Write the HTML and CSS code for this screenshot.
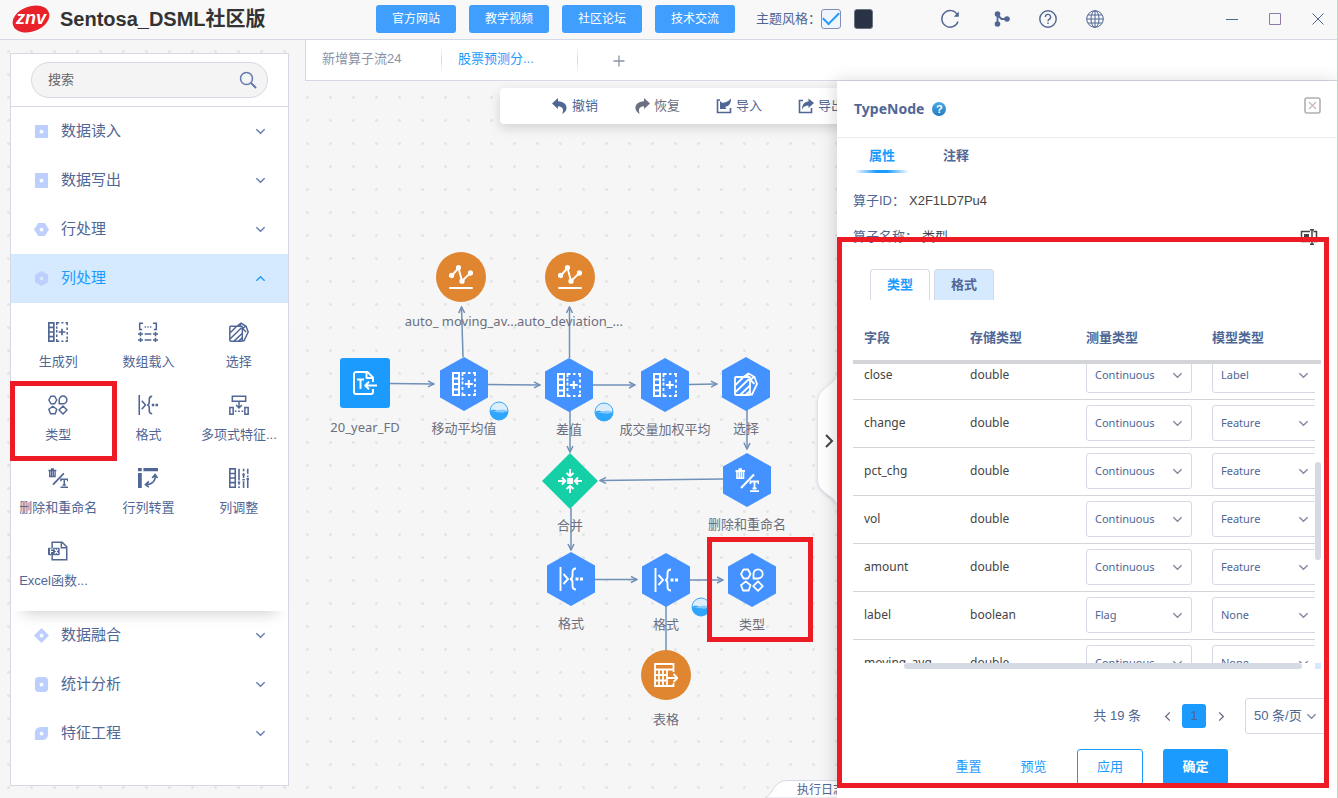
FILE: index.html
```html
<!DOCTYPE html>
<html lang="zh-CN">
<head>
<meta charset="utf-8">
<title>Sentosa_DSML社区版</title>
<link rel="stylesheet" href="styles.css">
</head>
<body>
<svg class="sprite" aria-hidden="true">
  <defs>
    <symbol id="i-down" viewBox="0 0 12 12"><path d="M1.500 3.500 6 8l4.500-4.500" fill="none" stroke="currentColor" stroke-width="1.500"/></symbol>
    <symbol id="i-gencol" viewBox="0 0 24 24"><g fill="none" stroke="currentColor" stroke-width="2"><path d="M1 1h6v22H1zM1 6.500h6M1 12h6M1 17.500h6"/><path d="M10.500 4V1h3M16 1h2.500M21 1h2v3M23 6.500v3M23 12v3M23 17.500v2.500M23 21v2h-2M18.500 23H16M13.500 23h-3v-2.500M10.500 18v-3M10.500 12.500v-3M10.500 8V5.500" stroke-width="1.800"/><path d="M12.800 12h8M16.800 8v8"/></g></symbol>
    <symbol id="i-array" viewBox="0 0 24 24"><g fill="none" stroke="currentColor" stroke-width="1.800"><path d="M6 1.500H2V9h3M18 1.500h4V9h-3"/><path d="M8 6h1.500M11.200 6h1.500M14.500 6H16"/><path d="M0 14.500h6M3 12v5M8 14.500h8M18 14.500h6M21 12v5M0 21.500h6M3 19v5M8 21.500h8M18 21.500h6M21 19v5"/></g></symbol>
    <symbol id="i-select" viewBox="0 0 24 24"><g fill="none" stroke="currentColor" stroke-width="1.800"><rect x="1" y="5" width="15" height="18" rx="1"/><path d="M1.500 13 9 5.500M1.500 20 15 7M6 23l10-9.500M11.500 23l4.500-4"/><path d="m10 4.500 4.500-3 6 3.500 2.500 7-5 10.500h-2.500M14.500 1.500l-2 4M15.500 9l4-4M16 7.500l4.500 4.500"/></g></symbol>
    <symbol id="i-type" viewBox="0 0 24 24"><g fill="none" stroke="currentColor" stroke-width="1.800" stroke-linejoin="round"><path d="M3.500 1.500h4.500l2.500 4.500L8 10.500H3.500L1 6z"/><path d="M13.500 10.500V6A4.600 4.600 0 1 1 18 10.500z"/><path d="m5.800 13.500 4.700 3.600-1.800 5.400H3L1 17.100z"/><path d="m18 13.300 4.800 4.800-4.800 4.800-4.800-4.800z"/></g></symbol>
    <symbol id="i-format" viewBox="0 0 24 24"><g fill="none" stroke="currentColor" stroke-width="1.900"><path d="M1.500 0v24M4.500 7l4.500 5-4.500 5"/><path d="M17 1.500c-3 0-3.500 1.500-3.500 4v3c0 2-.7 3.500-2.500 3.500 1.800 0 2.500 1.500 2.500 3.500v3c0 2.500.5 4 3.500 4"/></g><path d="M16.500 10.500h3v3h-3zM21 10.500h3v3h-3z" fill="currentColor"/></symbol>
    <symbol id="i-poly" viewBox="0 0 24 24"><g fill="none" stroke="currentColor" stroke-width="1.800"><path d="M4 1.500h16v6H4zM1 15h4v8H1zM19 15h4v8h-4zM12 7.500V15M8.500 12l3.500 3.500 3.500-3.500M7 19.500h2M11 19.500h2M15 19.500h2"/></g></symbol>
    <symbol id="i-rename" viewBox="0 0 24 24"><g fill="none" stroke="currentColor"><path d="M.5 3h9.500M3.500 1.200h3.500" stroke-width="1.800"/><path d="M2 3.500v6.700h6.500V3.500M4.200 3.500v6M6.300 3.500v6" stroke-width="1.600"/><path d="M6 20 19 6.500" stroke-width="2"/><path d="M15.500 16v-2.500h8V16M19.500 13.500v7M17.500 20.500h4M15 23.200h9" stroke-width="1.800"/></g></symbol>
    <symbol id="i-transpose" viewBox="0 0 24 24"><g fill="currentColor"><path d="M0 0h4.500v4H0zM6.500 0H24v4H6.500zM0 6h4.500v18H0z"/></g><path d="M20.500 9c1 6-3.500 11-11 11M17 12l3.500-4 3 4M13 16l-4 4 4 3" fill="none" stroke="currentColor" stroke-width="2"/></symbol>
    <symbol id="i-coladj" viewBox="0 0 24 24"><g fill="none" stroke="currentColor" stroke-width="1.900"><path d="M1 1h6.500v22H1zM1 6.500h6.500M1 12h6.500M1 17.500h6.500M12 1v14M12 18v2M12 22v2M17.500 1v3M17.500 6v6M16 14h3M17.500 16v8M22.500 1v6M22.500 9v2M22.500 13v11M10.500 17h3M16 8h3M21 13h3"/></g></symbol>
    <symbol id="i-fx" viewBox="0 0 24 24"><g fill="none" stroke="currentColor" stroke-width="1.800"><path d="M5 8V1.500h12l5.500 5.500v15.500H5V17M16 1.500V8h6.500"/></g><rect x="0" y="8" width="14" height="9" rx="1" fill="currentColor"/><path d="M3 15.500v-6h3.500M3 12.500h3M8 9.500l4 6M12 9.500l-4 6" fill="none" stroke="#fff" stroke-width="1.300"/></symbol>
    <symbol id="i-chart" viewBox="0 0 24 24"><g stroke="currentColor" stroke-width="1.900" fill="currentColor"><path d="M2.500 11 9.500 3 13 16l8.500-8" fill="none"/><circle cx="2.500" cy="10.500" r="1.700"/><circle cx="9.500" cy="2.700" r="1.700"/><circle cx="13" cy="16.200" r="1.700"/><circle cx="21.500" cy="8" r="1.700"/></g><path d="M.3 23h23.400" stroke="currentColor" stroke-width="2"/></symbol>
    <symbol id="i-read" viewBox="0 0 24 24"><g fill="none" stroke="currentColor" stroke-width="1.900" stroke-linejoin="round"><path d="M20 11V6.500L14.500 1H3a2 2 0 0 0-2 2v18a2 2 0 0 0 2 2h15a2 2 0 0 0 2-2v-3M13.500 1v6H20"/><path d="M4 8.500h7M7.500 8.500V18M24 14.500H12.500M16 10.800l-3.800 3.700 3.800 3.700"/></g></symbol>
    <symbol id="i-merge" viewBox="0 0 24 24"><path d="M9 9h6v6H9z" fill="currentColor"/><path d="M12 0v6.500M8.500 4 12 7.200 15.500 4M12 24v-6.500M8.500 20l3.500-3.200 3.500 3.200M0 12h6.500M4 8.500 7.200 12 4 15.500M24 12h-6.500M20 8.500 16.800 12l3.200 3.500" fill="none" stroke="currentColor" stroke-width="2"/></symbol>
    <symbol id="i-table" viewBox="0 0 24 24"><g fill="none" stroke="currentColor" stroke-width="1.800"><path d="M19.500 9V1H1v22h18.500v-3M1 6.500h18.500M1 12h11M1 17.500h11M5 6.500V23M9 6.500V23M13 6.500V23M13 15h10M19.500 11l4 4-4 4"/></g></symbol>
    <symbol id="i-undo" viewBox="0 0 16 16"><path d="M0 5.500 6 0v3.300c6 .2 9 3.700 8.500 7.200-.3 2.300-1.800 4.200-4.500 5.500 1.700-2.500 2-7.500-4-7.700V11z" fill="currentColor"/></symbol>
    <symbol id="i-redo" viewBox="0 0 16 16"><path d="M16 5.500 10 0v3.300C4 3.500 1 7 1.500 10.500 1.800 12.800 3.300 14.700 6 16 4.300 13.500 4 8.500 10 8.300V11z" fill="currentColor"/></symbol>
    <symbol id="i-import" viewBox="0 0 16 16"><path d="M4 2H1.500v12.500h13V10" fill="none" stroke="currentColor" stroke-width="1.600"/><path d="M4 8V3l2 1.800C9 5 12 4 15 .5c0 5-2 8-6 8.200l1.500 2.300H4z" fill="currentColor"/></symbol>
    <symbol id="i-export" viewBox="0 0 16 16"><path d="M5 2.500H1.500v12h12V10" fill="none" stroke="currentColor" stroke-width="1.600"/><path d="m16 5-5.500-4.500v3C6 4 4 7 4 11.500 5.500 8.500 7.500 7.500 10.500 7.500V10z" fill="currentColor"/></symbol>
    <symbol id="i-wave" viewBox="0 0 20 20"><circle cx="10" cy="10" r="9" fill="#dcedfb"/><path d="M1 10c3-2 5-1.500 8 .2s6 1.500 10-.7c.4 6-4 9.500-9 9.500S.6 15 1 10z" fill="#2ea5ff"/><path d="M1 10.500c4 1 6-1 9-1.500s6-.5 9 1c-3 .5-5 2-8 1.500S5 11.500 1 10.500z" fill="#85c8fb"/><circle cx="10" cy="10" r="9" fill="none" stroke="#3ba7f5"/></symbol>
  </defs>
</svg>

<div class="app">
  <header class="topbar">
    <svg class="logo" viewBox="0 0 38 30" role="img" aria-label="znv"><ellipse cx="19" cy="15" rx="19" ry="12.500" transform="rotate(-20 19 15)" fill="#e8212b"/><text class="logo-text" x="19" y="20" text-anchor="middle">znv</text></svg>
    <h1 class="brand">Sentosa_DSML社区版</h1>
    <nav class="links">
      <button class="link-btn" type="button">官方网站</button>
      <button class="link-btn" type="button">教学视频</button>
      <button class="link-btn" type="button">社区论坛</button>
      <button class="link-btn" type="button">技术交流</button>
    </nav>
    <div class="theme">
      <label for="theme-light">主题风格：</label>
      <input class="theme-check" id="theme-light" type="checkbox" checked>
      <button class="theme-dark" type="button" aria-label="深色"></button>
    </div>
    <div class="top-icons">
      <button class="icon-btn icon-refresh" type="button" aria-label="刷新"><svg width="20" height="20" viewBox="0 0 20 20"><path d="M17.500 6A8.300 8.300 0 1 0 18 12.500" fill="none" stroke="currentColor" stroke-width="1.400"/><path d="M18.800 2.500v5.300h-5z" fill="currentColor"/></svg></button>
      <button class="icon-btn" type="button" aria-label="分支"><svg width="18" height="18" viewBox="0 0 18 18"><path d="M4.500 3.500v11M4.500 5l4 4H14" fill="none" stroke="currentColor" stroke-width="1.800"/><g fill="currentColor"><circle cx="4.500" cy="4" r="2.800"/><circle cx="4.500" cy="14" r="2.800"/><circle cx="14" cy="9" r="2.800"/></g></svg></button>
      <button class="icon-btn" type="button" aria-label="帮助"><svg width="20" height="20" viewBox="0 0 20 20"><g fill="none" stroke="currentColor" stroke-width="1.400"><circle cx="10" cy="10" r="8.200"/><path d="M7.400 8a2.600 2.600 0 1 1 3.800 2.300c-.9.500-1.200.9-1.200 1.900M10 13.400v1.600"/></g></svg></button>
      <button class="icon-btn" type="button" aria-label="语言"><svg width="20" height="20" viewBox="0 0 20 20"><g fill="none" stroke="currentColor" stroke-width="1"><circle cx="10" cy="10" r="8.300"/><ellipse cx="10" cy="10" rx="4" ry="8.300"/><path d="M10 1.700v16.600M1.700 10h16.600M3 6h14M3 14h14"/></g></svg></button>
    </div>
    <div class="win-icons">
      <button class="icon-btn" type="button" aria-label="最小化"><svg width="14" height="14" viewBox="0 0 14 14"><path d="M1 7.500h12" stroke="currentColor"/></svg></button>
      <button class="icon-btn" type="button" aria-label="最大化"><svg width="14" height="14" viewBox="0 0 14 14"><path d="M1.500 1.500h11v11h-11z" fill="none" stroke="#8f7aa8"/></svg></button>
      <button class="icon-btn" type="button" aria-label="关闭"><svg width="14" height="14" viewBox="0 0 14 14"><path d="m1.500 1.500 11 11M12.500 1.500l-11 11" stroke="currentColor"/></svg></button>
    </div>
  </header>

  <div class="body">
    <aside class="side">
      <div class="side-panel">
        <div class="search-row">
          <div class="search">
            <input class="search-input" type="text" placeholder="搜索" aria-label="搜索">
            <svg width="18" height="18" viewBox="0 0 18 18"><g fill="none" stroke="#6479ae" stroke-width="1.500"><circle cx="7.500" cy="7.500" r="6"/><path d="m12 12 5 5" stroke-width="2"/></g></svg>
          </div>
        </div>
        <button class="cat" type="button"><svg class="cat-icon" viewBox="0 0 16 16"><rect x="1" y="1" width="14" height="14" rx="1"/><circle class="hole" cx="8" cy="8" r="2"/></svg><span class="cat-name">数据读入</span><svg class="chev"><use href="#i-down"/></svg></button>
        <button class="cat" type="button"><svg class="cat-icon" viewBox="0 0 16 16"><rect x="1" y="0" width="14" height="16" rx="1"/><circle class="hole" cx="8" cy="8" r="2"/></svg><span class="cat-name">数据写出</span><svg class="chev"><use href="#i-down"/></svg></button>
        <button class="cat" type="button"><svg class="cat-icon" viewBox="0 0 16 16"><path d="M4.500 1h7L16 8l-4.500 7h-7L0 8z"/><circle class="hole" cx="8" cy="8" r="2"/></svg><span class="cat-name">行处理</span><svg class="chev"><use href="#i-down"/></svg></button>
        <button class="cat cat-on" type="button"><svg class="cat-icon" viewBox="0 0 16 16"><path d="m8 0 7 4v8l-7 4-7-4V4z"/><circle class="hole" cx="8" cy="8" r="2"/></svg><span class="cat-name">列处理</span><svg class="chev"><use href="#i-down"/></svg></button>
        <div class="tools">
          <div class="tool"><svg class="tool-icon"><use href="#i-gencol"/></svg><span>生成列</span></div>
          <div class="tool"><svg class="tool-icon"><use href="#i-array"/></svg><span>数组载入</span></div>
          <div class="tool"><svg class="tool-icon"><use href="#i-select"/></svg><span>选择</span></div>
          <div class="tool"><svg class="tool-icon"><use href="#i-type"/></svg><span>类型</span><i class="mark mark-tool"></i></div>
          <div class="tool"><svg class="tool-icon"><use href="#i-format"/></svg><span>格式</span></div>
          <div class="tool"><svg class="tool-icon"><use href="#i-poly"/></svg><span>多项式特征...</span></div>
          <div class="tool"><svg class="tool-icon"><use href="#i-rename"/></svg><span>删除和重命名</span></div>
          <div class="tool"><svg class="tool-icon"><use href="#i-transpose"/></svg><span>行列转置</span></div>
          <div class="tool"><svg class="tool-icon"><use href="#i-coladj"/></svg><span>列调整</span></div>
          <div class="tool tool-left"><svg class="tool-icon"><use href="#i-fx"/></svg><span>Excel函数...</span></div>
        </div>
        <button class="cat" type="button"><svg class="cat-icon" viewBox="0 0 16 16"><path d="m8 0 8 8-8 8-8-8z"/><circle class="hole" cx="8" cy="8" r="2"/></svg><span class="cat-name">数据融合</span><svg class="chev"><use href="#i-down"/></svg></button>
        <button class="cat" type="button"><svg class="cat-icon" viewBox="0 0 16 16"><rect x="1" y="0" width="14" height="16" rx="4"/><circle class="hole" cx="8" cy="8" r="2"/></svg><span class="cat-name">统计分析</span><svg class="chev"><use href="#i-down"/></svg></button>
        <button class="cat" type="button"><svg class="cat-icon" viewBox="0 0 16 16"><path d="M1 15V7a6 6 0 0 1 6-6h8v8a6 6 0 0 1-6 6z"/><circle class="hole" cx="8" cy="8" r="2"/></svg><span class="cat-name">特征工程</span><svg class="chev"><use href="#i-down"/></svg></button>
      </div>
    </aside>

    <main class="main">
      <div class="flow-tabs">
        <button class="flow-tab" type="button">新增算子流24</button>
        <button class="flow-tab flow-tab-on" type="button">股票预测分...</button>
        <button class="flow-add" type="button" aria-label="新增"><svg width="12" height="12" viewBox="0 0 12 12"><path d="M.5 6h11M6 .5v11" stroke="currentColor" stroke-width="1.300"/></svg></button>
      </div>
      <div class="workspace">
        <section class="canvas">
          <svg class="edges" aria-hidden="true">
            <defs><marker id="arrow" viewBox="0 0 8 8" refX="7" refY="4" markerWidth="8" markerHeight="8" markerUnits="userSpaceOnUse" orient="auto"><path d="M1 1l6 3-6 3" fill="none" stroke="#7090b8" stroke-width="1.500"/></marker></defs>
            <g transform="translate(-306 -81)" fill="none" stroke="#7090b8" stroke-width="1.500" marker-end="url(#arrow)">
              <path d="M390 383.500 434 384"/><path d="M488 384.500 540 385"/><path d="M593 385h42"/><path d="M689 384.500 717 384"/>
              <path d="M747 410v39"/><path d="M723 479 600 480.500"/><path d="M570 411v41"/><path d="M571 508v42"/>
              <path d="M595 579.500h42"/><path d="M690 580h33"/><path d="M463 357 461.500 307"/><path d="M569.500 358v-51"/>
              <path d="M666 606v45" marker-end="none"/>
            </g>
          </svg>
          <div class="node n-chart1"><span class="shape circle"><svg><use href="#i-chart"/></svg></span><span class="node-name">auto_ moving_av...</span></div>
          <div class="node n-chart2"><span class="shape circle"><svg><use href="#i-chart"/></svg></span><span class="node-name">auto_deviation_...</span></div>
          <div class="node n-read"><span class="shape square"><svg><use href="#i-read"/></svg></span><span class="node-name">20_year_FD</span></div>
          <div class="node n-moving"><span class="shape hex"><svg><use href="#i-gencol"/></svg></span><span class="node-name">移动平均值</span><svg class="wave"><use href="#i-wave"/></svg></div>
          <div class="node n-diff"><span class="shape hex"><svg><use href="#i-gencol"/></svg></span><span class="node-name">差值</span><svg class="wave"><use href="#i-wave"/></svg></div>
          <div class="node n-volume"><span class="shape hex"><svg><use href="#i-gencol"/></svg></span><span class="node-name">成交量加权平均</span></div>
          <div class="node n-select"><span class="shape hex"><svg><use href="#i-select"/></svg></span><span class="node-name">选择</span></div>
          <div class="node n-rename"><span class="shape hex"><svg><use href="#i-rename"/></svg></span><span class="node-name">删除和重命名</span></div>
          <div class="node n-merge"><span class="shape diamond"><svg><use href="#i-merge"/></svg></span><span class="node-name">合并</span></div>
          <div class="node n-format1"><span class="shape hex"><svg><use href="#i-format"/></svg></span><span class="node-name">格式</span></div>
          <div class="node n-format2"><span class="shape hex"><svg><use href="#i-format"/></svg></span><span class="node-name">格式</span><svg class="wave"><use href="#i-wave"/></svg></div>
          <div class="node n-type"><span class="shape hex"><svg><use href="#i-type"/></svg></span><span class="node-name">类型</span><i class="mark mark-node"></i></div>
          <div class="node n-table"><span class="shape circle"><svg><use href="#i-table"/></svg></span><span class="node-name">表格</span></div>

          <div class="toolbar">
            <button class="tb-btn" type="button"><svg><use href="#i-undo"/></svg>撤销</button>
            <button class="tb-btn tb-muted" type="button"><svg><use href="#i-redo"/></svg>恢复</button>
            <button class="tb-btn" type="button"><svg><use href="#i-import"/></svg>导入</button>
            <button class="tb-btn" type="button"><svg><use href="#i-export"/></svg>导出</button>
          </div>
          <button class="handle" type="button" aria-label="收起"><svg width="19" height="134" viewBox="0 0 19 134"><path class="handle-bg" d="M20 0c-2 8-6 10-11 14S0 22 0 30v76c0 8 4 11 9 15s9 5 11 13z"/><path d="m8 62 6 6-6 6" fill="none" stroke="#444" stroke-width="2"/></svg></button>
          <div class="log"><svg width="120" height="18" viewBox="0 0 120 18"><path d="M0 18C8 15 8 .5 22 .5h98V18z" fill="#fff" stroke="#d5d9e5"/></svg><span>执行日志</span></div>
        </section>

        <aside class="props">
          <div class="props-head">
            <h2 class="props-title">TypeNode</h2>
            <span class="help">?</span>
            <button class="props-close" type="button" aria-label="关闭"><svg width="17" height="17" viewBox="0 0 17 17"><rect x="1" y="1" width="15" height="15" rx="2" fill="none" stroke="#b0b0b0" stroke-width="1.600"/><path d="m5 5 7 7M12 5l-7 7" stroke="#cdb9b9" stroke-width="1.400"/></svg></button>
          </div>
          <div class="props-body">
            <div class="props-tabs">
              <button class="ptab ptab-on" type="button">属性</button>
              <button class="ptab" type="button">注释</button>
            </div>
            <div class="field field-first"><span class="field-key">算子ID：</span><span class="field-val">X2F1LD7Pu4</span></div>
            <div class="field"><span class="field-key">算子名称：</span><span class="field-val">类型</span><button class="rename" type="button" aria-label="重命名"><svg width="18" height="16" viewBox="0 0 18 16"><g fill="none" stroke="#444" stroke-width="1.500"><path d="M10 2.500H1.500v10H10M13.500 2.500h3v10h-3M12 1v14M10 .8h4M10 15.200h4"/></g><path d="M4 5h5v5H4z" fill="#444"/></svg></button></div>
            <div class="card-tabs">
              <button class="ctab ctab-on" type="button">类型</button>
              <button class="ctab" type="button">格式</button>
            </div>
            <table class="grid grid-head">
              <colgroup><col class="c1"><col class="c2"><col class="c3"><col></colgroup>
              <thead><tr><th>字段</th><th>存储类型</th><th>测量类型</th><th>模型类型</th></tr></thead>
            </table>
            <div class="scroller">
              <div class="view">
                <table class="grid grid-body">
                  <colgroup><col class="c1"><col class="c2"><col class="c3"><col class="c4"></colgroup>
                  <tbody>
                    <tr><td>close</td><td>double</td><td><span class="pick"><select aria-label="close 测量类型"><option>Continuous</option></select><svg><use href="#i-down"/></svg></span></td><td><span class="pick"><select aria-label="close 模型类型"><option>Label</option></select><svg><use href="#i-down"/></svg></span></td></tr>
                    <tr><td>change</td><td>double</td><td><span class="pick"><select aria-label="change 测量类型"><option>Continuous</option></select><svg><use href="#i-down"/></svg></span></td><td><span class="pick"><select aria-label="change 模型类型"><option>Feature</option></select><svg><use href="#i-down"/></svg></span></td></tr>
                    <tr><td>pct_chg</td><td>double</td><td><span class="pick"><select aria-label="pct_chg 测量类型"><option>Continuous</option></select><svg><use href="#i-down"/></svg></span></td><td><span class="pick"><select aria-label="pct_chg 模型类型"><option>Feature</option></select><svg><use href="#i-down"/></svg></span></td></tr>
                    <tr><td>vol</td><td>double</td><td><span class="pick"><select aria-label="vol 测量类型"><option>Continuous</option></select><svg><use href="#i-down"/></svg></span></td><td><span class="pick"><select aria-label="vol 模型类型"><option>Feature</option></select><svg><use href="#i-down"/></svg></span></td></tr>
                    <tr><td>amount</td><td>double</td><td><span class="pick"><select aria-label="amount 测量类型"><option>Continuous</option></select><svg><use href="#i-down"/></svg></span></td><td><span class="pick"><select aria-label="amount 模型类型"><option>Feature</option></select><svg><use href="#i-down"/></svg></span></td></tr>
                    <tr><td>label</td><td>boolean</td><td><span class="pick"><select aria-label="label 测量类型"><option>Flag</option></select><svg><use href="#i-down"/></svg></span></td><td><span class="pick"><select aria-label="label 模型类型"><option>None</option></select><svg><use href="#i-down"/></svg></span></td></tr>
                    <tr><td>moving_avg</td><td>double</td><td><span class="pick"><select aria-label="moving_avg 测量类型"><option>Continuous</option></select><svg><use href="#i-down"/></svg></span></td><td><span class="pick"><select aria-label="moving_avg 模型类型"><option>None</option></select><svg><use href="#i-down"/></svg></span></td></tr>
                  </tbody>
                </table>
              </div>
              <div class="vbar"><div class="vthumb"></div></div>
              <div class="hbar"><div class="hthumb"></div></div>
              <div class="corner"></div>
            </div>
            <div class="pager">
              <span class="total">共 19 条</span>
              <button class="pg pg-prev" type="button" aria-label="上一页"><svg><use href="#i-down"/></svg></button>
              <button class="pg pg-on" type="button">1</button>
              <button class="pg pg-next" type="button" aria-label="下一页"><svg><use href="#i-down"/></svg></button>
              <span class="pick pick-size"><select aria-label="每页条数"><option>50 条/页</option></select><svg><use href="#i-down"/></svg></span>
            </div>
            <div class="actions">
              <button class="act" type="button">重置</button>
              <button class="act" type="button">预览</button>
              <button class="act act-line" type="button">应用</button>
              <button class="act act-fill" type="button">确定</button>
            </div>
          </div>
          <i class="mark mark-props"></i>
        </aside>
      </div>
    </main>
  </div>
</div>
</body>
</html>
```
FILE: styles.css
```css
* { box-sizing: border-box; }
body {
  margin: 0;
  font: 13px/20px "Liberation Sans", "Noto Sans CJK SC", sans-serif;
  color: #506694;
}
button {
  margin: 0;
  padding: 0;
  border: 0;
  background: none;
  font: inherit;
  color: inherit;
}
.sprite { display: block; width: 0; height: 0; }
.app {
  display: flex;
  flex-direction: column;
  height: 100vh;
  overflow: hidden;
  border-right: 1px solid #b5dcc8;
  background: #f6f6f6 radial-gradient(circle, #e5e5e5 1px, transparent 2px) -3px -6px / 23px 23px;
}

/* top bar */
.topbar {
  display: flex;
  flex: none;
  align-items: center;
  height: 40px;
  padding: 0 12px 2px;
  border-bottom: 1px solid #d5d9e5;
  background: #f8f8f8;
}
.logo { width: 38px; height: 30px; }
.logo-text { fill: #fff; font: italic bold 18px "Liberation Sans", sans-serif; }
.brand {
  width: 326px;
  margin: 0;
  padding-left: 10px;
  font-size: 20px;
  line-height: 28px;
  color: #333;
}
.links { display: flex; gap: 13px; }
.link-btn {
  width: 80px;
  height: 28px;
  border-radius: 3px;
  background: #409eff;
  font-size: 12px;
  color: #fff;
}
.theme { display: flex; align-items: center; margin-left: 21px; }
.theme-check {
  display: grid;
  place-items: center;
  appearance: none;
  width: 20px;
  height: 20px;
  margin: 0 13px 0 0;
  border: 1px solid #7f8fb5;
  border-radius: 3px;
  background: #f0f4fd;
}
.theme-check:checked::before {
  content: "";
  width: 14px;
  height: 7px;
  border: solid #1c9bff;
  border-width: 0 0 2px 2px;
  transform: translateY(-2px) rotate(-45deg);
}
.theme-dark {
  width: 19px;
  height: 20px;
  border: 1px solid #6b7286;
  border-radius: 3px;
  background: #2a3245;
}
.icon-btn { display: grid; place-items: center; }
.top-icons { display: flex; align-items: center; gap: 27px; margin-left: 67px; }
.icon-refresh { margin-right: 6px; }
.win-icons { display: flex; gap: 29px; margin-left: auto; }

/* operator library */
.body { display: flex; flex: 1; min-height: 0; }
.side { flex: none; display: flex; width: 305px; padding: 13px 16px 12px 10px; }
.side-panel {
  display: flex;
  flex: 1;
  flex-direction: column;
  min-width: 0;
  border: 1px solid #d5d9e5;
  background: #fff;
}
.search-row { padding: 8px 20px; border-bottom: 1px solid #d5d9e5; }
.search {
  display: flex;
  align-items: center;
  height: 36px;
  padding: 0 10px 0 16px;
  border: 1px solid #d5d9e5;
  border-radius: 18px;
  background: #f4f4f4;
}
.search-input {
  flex: 1;
  min-width: 0;
  padding: 0;
  border: 0;
  outline: 0;
  background: none;
  font: inherit;
}
.search-input::placeholder { color: #666; }
.cat {
  display: flex;
  flex: none;
  align-items: center;
  height: 49px;
  padding: 0 22px 0 23px;
  font-size: 15px;
  text-align: left;
}
.cat-name { flex: 1; padding: 0 0 2px 12px; }
.cat-icon { width: 15px; height: 15px; fill: #bccfff; }
.hole { fill: #fff; }
.chev { width: 11px; height: 11px; color: #6479ae; }
.cat-on { background: #d6eaff; color: #1c9bff; }
.cat-on .hole { fill: #d6eaff; }
.cat-on .chev { color: #1c9bff; transform: rotate(180deg); }
.tools {
  display: grid;
  grid-template-columns: repeat(3, 1fr);
  row-gap: 23px;
  padding: 19px 4px 20px 2px;
  background: #fff;
  box-shadow: 0 14px 14px -12px rgba(0, 0, 0, 0.2);
  z-index: 1;
}
.tool {
  position: relative;
  display: flex;
  flex-direction: column;
  align-items: center;
  gap: 10px;
  white-space: nowrap;
}
.tool-icon { width: 20px; height: 20px; }
.tool-left span { width: 78px; }

/* highlight frames */
.mark {
  position: absolute;
  border: 5px solid #ed1c24;
  pointer-events: none;
}
.mark-tool { left: -3px; top: -14px; width: 107px; height: 80px; }
.mark-node { left: 15px; top: -16px; width: 106px; height: 105px; }
.mark-props { left: 0; right: 8px; top: 156px; height: 551px; }

/* flow tabs */
.main {
  display: flex;
  flex: 1;
  flex-direction: column;
  min-width: 0;
}
.flow-tabs {
  display: flex;
  flex: none;
  height: 41px;
  border-bottom: 1px solid #d5d9e5;
  border-left: 1px solid #d5d9e5;
  background: #fff;
}
.flow-tab {
  width: 136px;
  padding: 0 0 2px 16px;
  background: linear-gradient(transparent, #d5d9e5, transparent) right center / 1px 30px no-repeat;
  text-align: left;
  color: #8a93a8;
}
.flow-tab-on { color: #1c9bff; }
.flow-add { display: grid; place-items: center; width: 82px; padding-top: 2px; color: #8a93a8; }

/* canvas */
.workspace { display: flex; flex: 1; min-height: 0; padding-left: 1px; }
.canvas { position: relative; flex: 1; min-width: 0; overflow: hidden; }
.edges { position: absolute; inset: 0; width: 100%; height: 100%; }
.node {
  position: absolute;
  display: flex;
  flex-direction: column;
  align-items: center;
  gap: 7px;
  width: 120px;
  font-family: "Noto Sans", "Noto Sans CJK SC", sans-serif;
  white-space: nowrap;
  color: #6b6f80;
}
.shape { display: grid; place-items: center; width: 50px; height: 50px; margin: 2px 0; color: #fff; }
.shape svg { width: 24px; height: 24px; }
.circle { border-radius: 50%; background: #e08530; }
.square { border-radius: 3px; background: #1c9bff; }
.hex {
  width: 48px;
  height: 54px;
  margin: 0;
  background: #4492ff;
  clip-path: polygon(50% 0, 100% 25%, 100% 75%, 50% 100%, 0 75%, 0 25%);
}
.diamond {
  width: 56px;
  height: 56px;
  margin: -1px 0;
  background: #15cfa7;
  clip-path: polygon(50% 0, 100% 50%, 50% 100%, 0 50%);
}
.wave { position: absolute; left: 85px; top: 44px; width: 20px; height: 20px; }
.n-chart1 { left: 95px; top: 169px; }
.n-chart2 { left: 204px; top: 169px; }
.n-read { left: -1px; top: 275px; }
.n-moving { left: 98px; top: 276px; }
.n-diff { left: 203px; top: 277px; }
.n-volume { left: 299px; top: 277px; }
.n-select { left: 380px; top: 276px; }
.n-rename { left: 381px; top: 372px; }
.n-merge { left: 204px; top: 373px; }
.n-format1 { left: 205px; top: 471px; }
.n-format2 { left: 300px; top: 472px; }
.n-type { left: 386px; top: 472px; }
.n-table { left: 300px; top: 567px; }
.toolbar {
  position: absolute;
  left: 194px;
  right: -40px;
  top: 7px;
  display: flex;
  gap: 36px;
  height: 36px;
  padding: 0 52px;
  border-radius: 4px;
  background: #fff;
  box-shadow: 0 4px 12px rgba(0, 0, 0, 0.15);
}
.tb-btn { display: flex; flex: none; align-items: center; gap: 4px; }
.tb-btn svg { width: 16px; height: 16px; }
.tb-muted { color: #6b6f80; }
.handle { position: absolute; right: 0; top: calc(50% - 67px); height: 134px; }
.handle svg { display: block; overflow: visible; }
.handle-bg { fill: #fff; filter: drop-shadow(0 1px 2px rgba(120, 130, 170, 0.4)); }
.log { position: absolute; right: -48px; bottom: 0; display: grid; width: 120px; height: 18px; }
.log svg, .log span { grid-area: 1 / 1; }
.log span { padding-left: 32px; font-size: 12px; }

/* property panel */
.props {
  position: relative;
  z-index: 1;
  flex: none;
  width: 500px;
  background: #fff;
  box-shadow: -2px 0 16px rgba(0, 0, 0, 0.15);
}
.props-head {
  display: flex;
  align-items: center;
  height: 57px;
  padding: 0 16px 1px 17px;
  border-bottom: 1px solid #ebedf0;
}
.props-title {
  margin: 0;
  font: bold 14px/20px "Noto Sans", sans-serif;
}
.help {
  width: 14px;
  height: 14px;
  margin-left: 8px;
  border-radius: 50%;
  background: linear-gradient(#4aaae8, #2779be);
  font: bold 11px/14px "Liberation Sans", sans-serif;
  text-align: center;
  color: #fff;
}
.props-close { height: 17px; margin: 0 0 6px auto; }
.props-close svg { display: block; }
.props-body { padding: 7px 16px 0; }
.props-tabs { display: flex; gap: 20px; padding-left: 2px; }
.ptab {
  width: 54px;
  height: 28px;
  padding-bottom: 7px;
  font-weight: bold;
}
.ptab-on {
  background: linear-gradient(90deg, transparent, #1c9bff 40%, #1c9bff 60%, transparent) bottom / 100% 3px no-repeat;
  color: #1c9bff;
}
.field { display: flex; align-items: center; height: 20px; margin-top: 16px; }
.field-first { margin-top: 18px; }
.field-key { margin-right: 4px; }
.field-val { color: #444; }
.rename { height: 16px; margin-left: auto; margin-right: 3px; }
.rename svg { display: block; }
.card-tabs { display: flex; gap: 4px; margin-top: 22px; padding-left: 17px; }
.ctab {
  width: 60px;
  height: 31px;
  border: 1px solid #d5d9e5;
  border-bottom: 0;
  border-radius: 4px 4px 0 0;
  background: #d6eaff;
  font-weight: bold;
}
.ctab-on { background: #fff; color: #1c9bff; }
.grid {
  table-layout: fixed;
  border-collapse: separate;
  border-spacing: 0;
  text-align: left;
}
.c1 { width: 106px; }
.c2 { width: 116px; }
.c3 { width: 126px; }
.c4 { width: 130px; }
.grid-head {
  width: 100%;
  margin-top: 16px;
  border-bottom: 4px solid #d3d5d9;
}
.grid th { height: 44px; padding: 0 0 0 11px; }
.grid-body {
  width: 478px;
  margin-top: -12px;
  font: 12px/18px "Noto Sans", sans-serif;
  color: #444;
}
.grid td { height: 48px; padding: 0 0 1px 11px; border-bottom: 1px solid #d3d5d9; }
.scroller { display: grid; grid-template: 299px 6px / minmax(0, 1fr) 6px; }
.view { overflow: hidden; }
.vthumb { height: 98px; margin-top: 98px; border-radius: 3px; background: #d6dae4; }
.hthumb { height: 6px; margin: 0 13px 0 51px; border-radius: 3px; background: #d6dae4; }
.corner { background: #d6eaff; }
.pick { display: grid; width: 106px; height: 36px; }
.pick select, .pick svg { grid-area: 1 / 1; }
.pick select {
  appearance: none;
  padding: 0 8px 1px;
  border: 1px solid #d5d9e5;
  border-radius: 3px;
  background: #fff;
  font: 11px/18px "Noto Sans", sans-serif;
  color: #506694;
}
.pick svg {
  place-self: center end;
  width: 11px;
  height: 11px;
  margin-right: 9px;
  color: #8189a0;
  pointer-events: none;
}
.pager {
  display: flex;
  align-items: center;
  justify-content: flex-end;
  margin: 29px -6px 0 0;
}
.total { margin-right: 14px; }
.pg { display: grid; place-items: center; width: 24px; height: 24px; margin-right: 3px; }
.pg svg { width: 11px; height: 11px; color: #6b7286; }
.pg-prev svg { transform: rotate(90deg); }
.pg-next svg { transform: rotate(-90deg); }
.pg-on { border-radius: 3px; background: #1c9bff; }
.pick-size { width: 82px; margin-left: 9px; }
.pick-size select { font: 13px/20px "Liberation Sans", "Noto Sans CJK SC", sans-serif; }
.pick-size svg { margin-right: 10px; }
.actions { display: flex; justify-content: flex-end; margin-top: 15px; padding-right: 93px; }
.act { width: 65px; height: 36px; color: #1c9bff; }
.act-line {
  width: 66px;
  margin: 0 20px 0 11px;
  border: 1px solid #1c9bff;
  border-radius: 3px;
}
.act-fill { border-radius: 3px; background: #1c9bff; font-weight: bold; color: #fff; }
```
